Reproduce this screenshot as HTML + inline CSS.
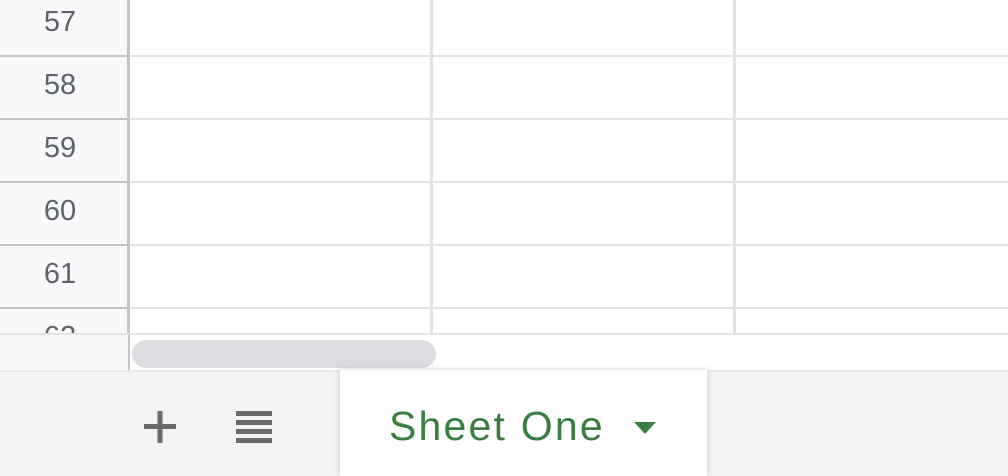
<!DOCTYPE html>
<html><head><style>
body{margin:0;width:1008px;height:476px;overflow:hidden;background:#fff;font-family:"Liberation Sans",sans-serif;position:relative}
.a{position:absolute}
.num{position:absolute;left:0;width:120px;text-align:center;font-size:29px;color:#5f6368}
</style></head><body>
<div class="a" style="left:0;top:0;width:128px;height:370px;background:#f8f9fa"></div>
<div class="a" style="left:127px;top:0;width:3px;height:370px;background:#c4c4c4"></div>
<div class="a" style="left:0;top:55px;width:128px;height:2px;background:#c4c4c4"></div>
<div class="a" style="left:0;top:118px;width:128px;height:2px;background:#c4c4c4"></div>
<div class="a" style="left:0;top:181px;width:128px;height:2px;background:#c4c4c4"></div>
<div class="a" style="left:0;top:244px;width:128px;height:2px;background:#c4c4c4"></div>
<div class="a" style="left:0;top:307px;width:128px;height:2px;background:#c4c4c4"></div>
<div class="a" style="left:130px;top:55px;width:878px;height:2px;background:#e2e2e2"></div>
<div class="a" style="left:130px;top:118px;width:878px;height:2px;background:#e2e2e2"></div>
<div class="a" style="left:130px;top:181px;width:878px;height:2px;background:#e2e2e2"></div>
<div class="a" style="left:130px;top:244px;width:878px;height:2px;background:#e2e2e2"></div>
<div class="a" style="left:130px;top:307px;width:878px;height:2px;background:#e2e2e2"></div>
<div class="a" style="left:430px;top:0;width:3px;height:334px;background:#e2e2e2"></div>
<div class="a" style="left:733px;top:0;width:3px;height:334px;background:#e2e2e2"></div>
<div class="num" style="top:6px">57</div>
<div class="num" style="top:69px">58</div>
<div class="num" style="top:132px">59</div>
<div class="num" style="top:195px">60</div>
<div class="num" style="top:258px">61</div>
<div class="a" style="left:0;top:320px;width:128px;height:13px;overflow:hidden"><div class="num" style="top:1px">62</div></div>
<div class="a" style="left:0;top:333px;width:128px;height:37px;background:#f8f9fa"></div>
<div class="a" style="left:0;top:333px;width:1008px;height:2px;background:#e2e2e2"></div>
<div class="a" style="left:130px;top:335px;width:878px;height:35px;background:#fff"></div>
<div class="a" style="left:132px;top:340px;width:304px;height:28px;border-radius:14px;background:#dadce0"></div>
<div class="a" style="left:0;top:370px;width:1008px;height:106px;background:#f1f3f4"></div>
<div class="a" style="left:0;top:370px;width:1008px;height:2px;background:#e8eaed"></div>
<svg class="a" style="left:140px;top:406px" width="40" height="45"><rect x="4" y="18" width="32" height="5" fill="#6a6a6a"/><rect x="17.5" y="5" width="5" height="32" fill="#6a6a6a"/></svg>
<svg class="a" style="left:233px;top:408px" width="42" height="40"><rect x="3" y="3" width="36" height="5" fill="#6a6a6a"/><rect x="3" y="12" width="36" height="5" fill="#6a6a6a"/><rect x="3" y="21" width="36" height="5" fill="#6a6a6a"/><rect x="3" y="30" width="36" height="5" fill="#6a6a6a"/></svg>
<div class="a" style="left:340px;top:370px;width:367px;height:106px;background:#fff;box-shadow:0 0 6px rgba(0,0,0,.18)"></div>
<div class="a" style="left:389px;top:403px;font-size:41px;color:#3a7f3f;letter-spacing:2.2px">Sheet One</div>
<svg class="a" style="left:632px;top:420px" width="26" height="16"><path d="M2 2 L24 2 L13 14 Z" fill="#3a7f3f"/></svg>
</body></html>
